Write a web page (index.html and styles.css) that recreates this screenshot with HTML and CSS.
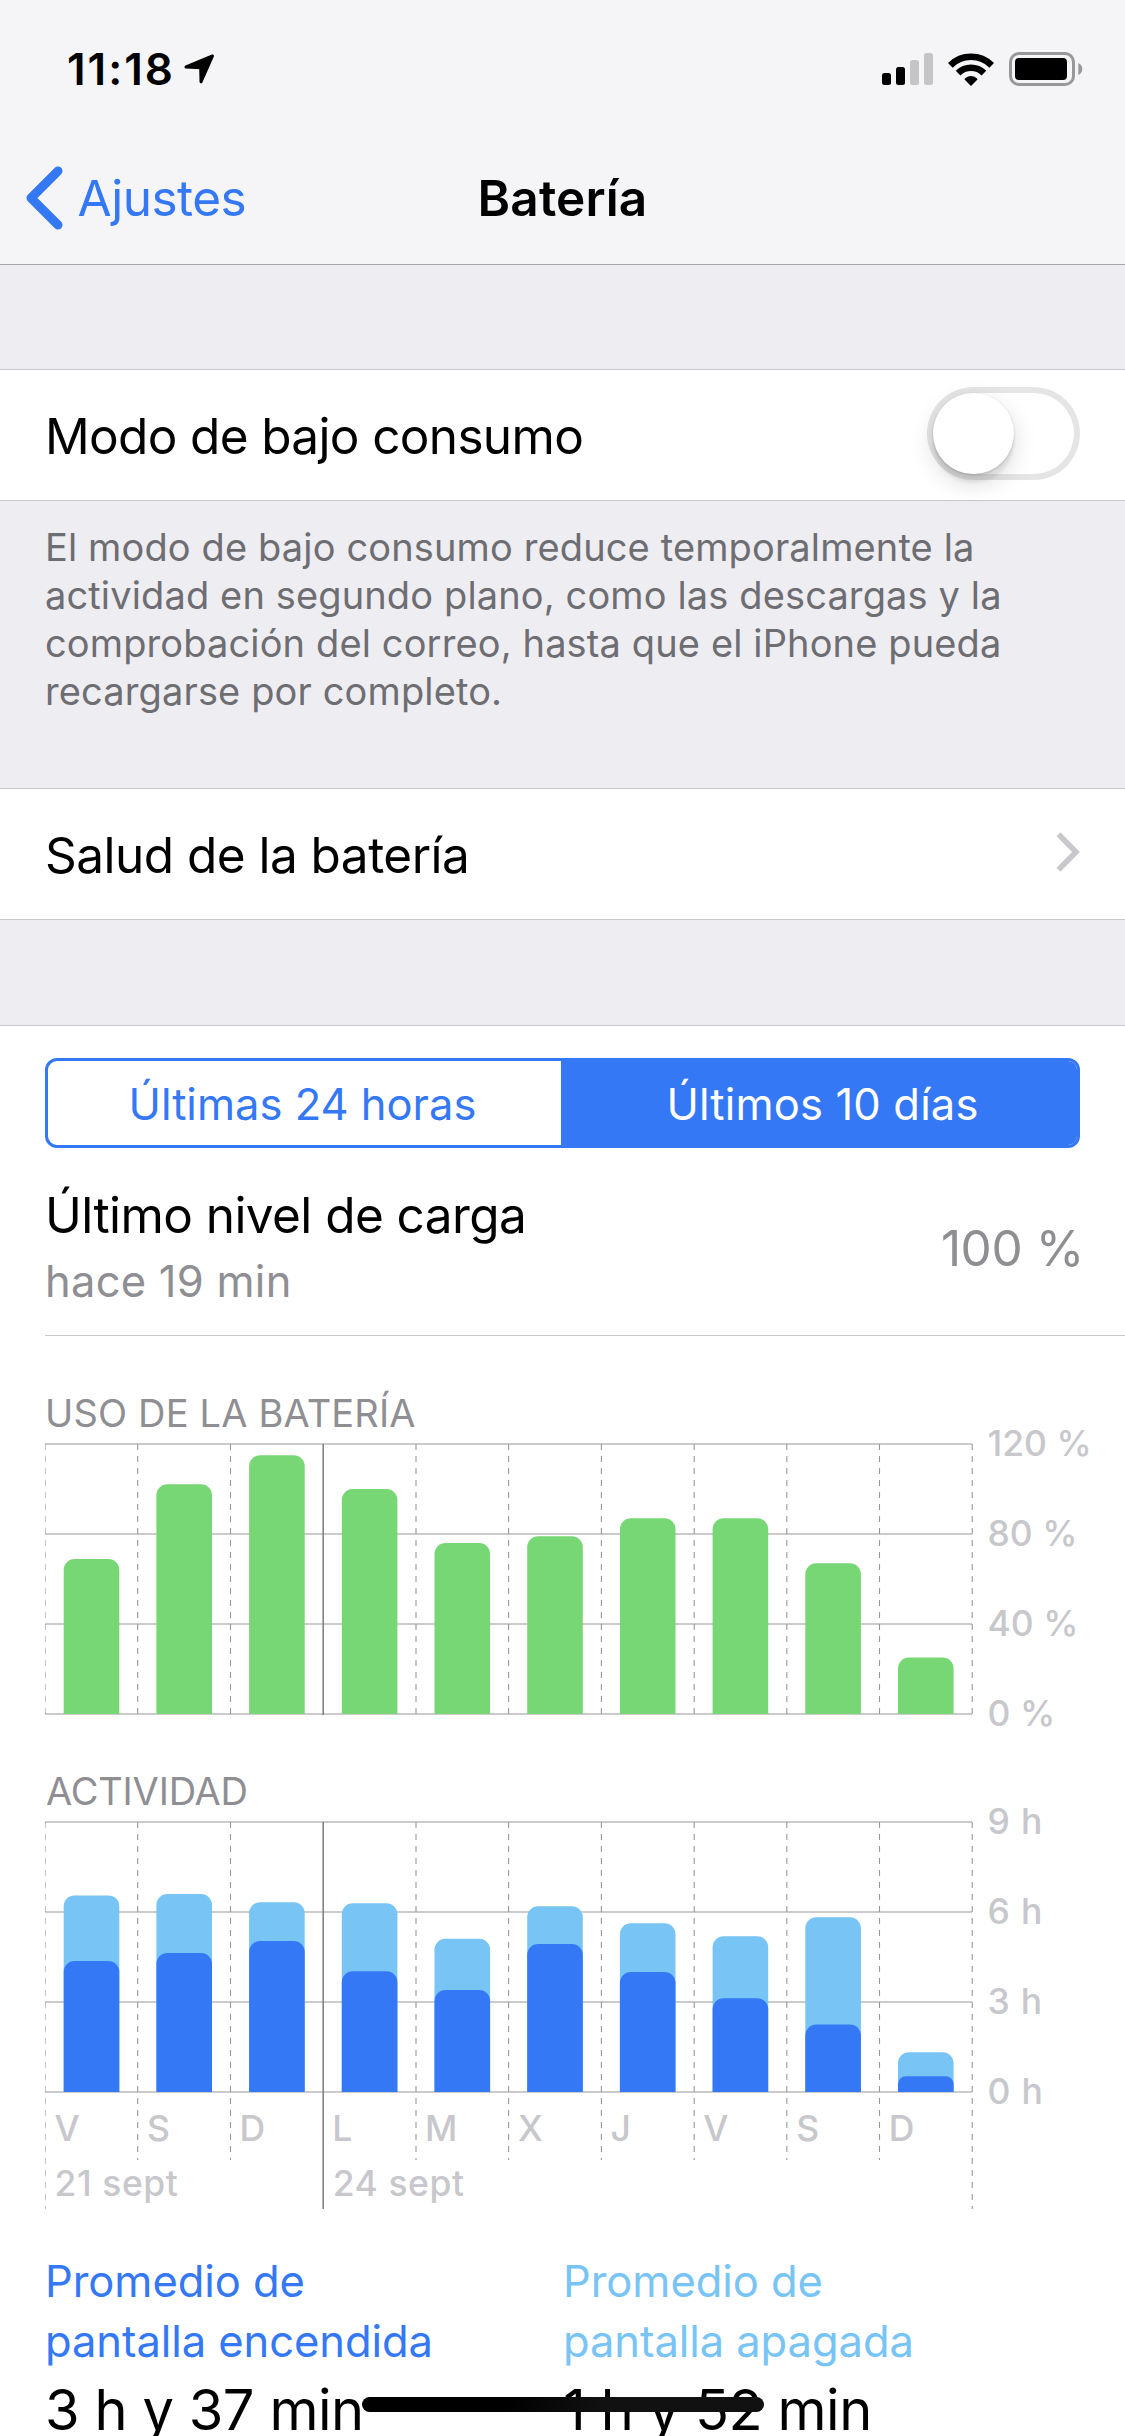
FILE: index.html
```html
<!DOCTYPE html>
<html lang="es">
<head>
<meta charset="utf-8">
<title>Batería</title>
<link rel="stylesheet" href="styles.css">
</head>
<body>
<div class="screen">
  <header class="top">
    <div class="status">
      <span class="time">11:18</span>
      <svg class="locate" width="31" height="30" viewBox="0 0 31 30"><path d="M2 13 28.5 2 17 27.8 16.7 13.8Z" fill="#000" stroke="#000" stroke-width="3" stroke-linejoin="round"/></svg>
      <div class="status-icons">
        <svg width="51" height="32" viewBox="0 0 51 32">
          <rect y="20" width="9" height="12" rx="2.5"/>
          <rect x="14" y="14" width="9" height="18" rx="2.5"/>
          <rect x="28" y="7" width="9" height="25" rx="2.5" fill="#c5c5c7"/>
          <rect x="42" width="9" height="32" rx="2.5" fill="#c5c5c7"/>
        </svg>
        <svg width="46" height="33" viewBox="0 0 46 33">
          <path d="M2.3 12.3A29.3 29.3 0 0 1 43.7 12.3M10.1 20.1A18.3 18.3 0 0 1 35.9 20.1" fill="none" stroke="#000" stroke-width="6.6"/>
          <path d="M23 33 16.8 26.8Q16.3 26 17.2 25.2 23 21 28.8 25.2 29.7 26 29.2 26.8Z"/>
        </svg>
        <svg width="74" height="34" viewBox="0 0 74 34">
          <rect x="1.5" y="1.5" width="63" height="31" rx="8.5" fill="none" stroke="#98989a" stroke-width="3"/>
          <rect x="6" y="6" width="52" height="22" rx="4"/>
          <path d="M69.3 11Q73.3 13 73.3 17T69.3 23Z" fill="#98989a"/>
        </svg>
      </div>
    </div>
    <nav class="nav">
      <a class="back">
        <svg width="37" height="64" viewBox="0 0 37 64"><path d="M32 5 5 32 32 59" fill="none" stroke="#3478f6" stroke-width="9" stroke-linecap="round" stroke-linejoin="round"/></svg>
        <span>Ajustes</span>
      </a>
      <h1>Batería</h1>
    </nav>
  </header>

  <section class="row power">
    <span>Modo de bajo consumo</span>
    <span class="switch"><i class="knob"></i></span>
  </section>
  <p class="note">El modo de bajo consumo reduce temporalmente la<br>actividad en segundo plano, como las descargas y la<br>comprobación del correo, hasta que el iPhone pueda<br>recargarse por completo.</p>

  <section class="row health">
    <span>Salud de la batería</span>
    <svg class="more" width="24" height="40" viewBox="0 0 24 40"><path d="M2.5 2.2 20 20 2.5 37.8" fill="none" stroke="#c7c7cc" stroke-width="5.5"/></svg>
  </section>

  <main class="panel">
    <div class="segments">
      <span class="segment">Últimas 24 horas</span>
      <span class="segment active">Últimos 10 días</span>
    </div>

    <div class="charge">
      <div>
        <div class="charge-title">Último nivel de carga</div>
        <div class="charge-time">hace 19 min</div>
      </div>
      <span class="charge-value">100 %</span>
    </div>

    <h2 class="usage-title">USO DE LA BATERÍA</h2>
    <div class="chart usage">
      <svg class="plot" width="930" height="286" viewBox="0 0 930 286">
        <defs><clipPath id="area"><rect width="930" height="278"/></clipPath></defs>
        <path class="grid" d="M0 8H927M0 98H927M0 188H927M0 278H927"/>
        <path class="days" d="M0 8V279M92.7 8V279M185.5 8V279M371 8V279M463.6 8V279M556.4 8V279M649.2 8V279M741.8 8V279M834.5 8V279M927.2 8V279"/>
        <path class="week" d="M278.2 8V279"/>
        <g class="green" clip-path="url(#area)">
          <rect x="18.7" y="123" width="55.6" height="300" rx="11"/>
          <rect x="111.4" y="48.3" width="55.6" height="300" rx="11"/>
          <rect x="204.1" y="19.3" width="55.6" height="300" rx="11"/>
          <rect x="296.8" y="53" width="55.6" height="300" rx="11"/>
          <rect x="389.5" y="107" width="55.6" height="300" rx="11"/>
          <rect x="482.2" y="100.2" width="55.6" height="300" rx="11"/>
          <rect x="574.9" y="82.2" width="55.6" height="300" rx="11"/>
          <rect x="667.6" y="82.2" width="55.6" height="300" rx="11"/>
          <rect x="760.3" y="127.2" width="55.6" height="300" rx="11"/>
          <rect x="853" y="221.5" width="55.6" height="300" rx="11"/>
        </g>
      </svg>
      <div class="axis"><span>120 %</span><span>80 %</span><span>40 %</span><span>0 %</span></div>
    </div>

    <h2 class="activity-title">ACTIVIDAD</h2>
    <div class="chart activity">
      <svg class="plot" width="930" height="395" viewBox="0 0 930 395">
        <path class="grid" d="M0 8H927M0 98H927M0 188H927M0 278H927"/>
        <path class="days" d="M0 8V395M92.7 8V346M185.5 8V346M371 8V346M463.6 8V346M556.4 8V346M649.2 8V346M741.8 8V346M834.5 8V346M927.2 8V395"/>
        <path class="week" d="M278.2 8V395"/>
        <g class="light" clip-path="url(#area)">
          <rect x="18.7" y="81.4" width="55.6" height="300" rx="11"/>
          <rect x="111.4" y="80" width="55.6" height="300" rx="11"/>
          <rect x="204.1" y="88.3" width="55.6" height="300" rx="11"/>
          <rect x="296.8" y="89.2" width="55.6" height="300" rx="11"/>
          <rect x="389.5" y="124.7" width="55.6" height="300" rx="11"/>
          <rect x="482.2" y="92.2" width="55.6" height="300" rx="11"/>
          <rect x="574.9" y="109.2" width="55.6" height="300" rx="11"/>
          <rect x="667.6" y="122.2" width="55.6" height="300" rx="11"/>
          <rect x="760.3" y="103.3" width="55.6" height="300" rx="11"/>
          <rect x="853" y="238.2" width="55.6" height="300" rx="11"/>
        </g>
        <g class="dark" clip-path="url(#area)">
          <rect x="18.7" y="147" width="55.6" height="300" rx="11"/>
          <rect x="111.4" y="139" width="55.6" height="300" rx="11"/>
          <rect x="204.1" y="127" width="55.6" height="300" rx="11"/>
          <rect x="296.8" y="157.3" width="55.6" height="300" rx="11"/>
          <rect x="389.5" y="176" width="55.6" height="300" rx="11"/>
          <rect x="482.2" y="130" width="55.6" height="300" rx="11"/>
          <rect x="574.9" y="158" width="55.6" height="300" rx="11"/>
          <rect x="667.6" y="184.2" width="55.6" height="300" rx="11"/>
          <rect x="760.3" y="210.5" width="55.6" height="300" rx="11"/>
          <rect x="853" y="262.2" width="55.6" height="300" rx="8"/>
        </g>
        <g class="labels">
          <text x="9.5" y="327">V</text><text x="102" y="327">S</text><text x="194.5" y="327">D</text><text x="287.2" y="327">L</text><text x="380" y="327">M</text><text x="473" y="327">X</text><text x="565.5" y="327">J</text><text x="658.3" y="327">V</text><text x="751.2" y="327">S</text><text x="843.7" y="327">D</text>
          <text x="9.5" y="382">21 sept</text><text x="287.7" y="382">24 sept</text>
        </g>
      </svg>
      <div class="axis hours"><span>9 h</span><span>6 h</span><span>3 h</span><span>0 h</span></div>
    </div>

    <div class="averages">
      <div class="screen-on">Promedio de<br>pantalla encendida<strong>3 h y 37 min</strong></div>
      <div class="screen-off">Promedio de<br>pantalla apagada<strong>1 h y 52 min</strong></div>
    </div>
  </main>
  <div class="home"></div>
</div>
</body>
</html>
```
FILE: styles.css
```css
* { box-sizing: border-box; }
body { margin: 0; background: #efeff4; }
.screen {
  position: relative;
  width: 1125px;
  height: 2436px;
  overflow: hidden;
  background: #eeedf2;
  color: #000;
  font-family: Inter, "Liberation Sans", sans-serif;
  font-size: 49.5px;
  line-height: 60px;
  white-space: nowrap;
}
svg { display: block; flex: none; }
h1, h2, p { margin: 0; font-weight: 400; }

/* Status bar and navigation */
.top { height: 265px; background: #f5f5f7; border-bottom: 1px solid #a7a7aa; }
.status { display: flex; align-items: center; height: 138px; padding: 0 42px 0 67px; }
.time { width: 117px; font-size: 44px; font-weight: 600; letter-spacing: 2px; }
.status-icons { display: flex; align-items: center; gap: 15px; margin-left: auto; }
.nav {
  display: grid;
  grid-template-columns: 1fr auto 1fr;
  align-items: center;
  height: 126px;
  padding: 0 26px 6px;
}
.back { display: flex; align-items: center; gap: 14.5px; color: #3478f6; letter-spacing: -0.5px; }
.back span { margin-bottom: 1px; }
h1 { font-size: 49.5px; font-weight: 600; letter-spacing: 0.15px; }

/* Table rows */
.row {
  display: flex;
  align-items: center;
  justify-content: space-between;
  height: 132px;
  padding: 2px 45px 0;
  background: #fff;
  border: solid #c8c7cc;
  border-width: 1px 0;
  letter-spacing: -0.65px;
}
.power { margin-top: 104px; }
.health { letter-spacing: -0.52px; }
.more { margin-bottom: 6px; }
.switch {
  width: 153px;
  height: 93px;
  margin-bottom: 5px;
  padding: 6px;
  border-radius: 47px;
  box-shadow: inset 0 0 0 6px #e5e5e5;
}
.knob {
  display: block;
  width: 81px;
  height: 81px;
  border-radius: 50%;
  background: #fff;
  box-shadow: 0 9px 24px rgba(0, 0, 0, .15), 0 9px 3px rgba(0, 0, 0, .06), 0 1px 3px rgba(0, 0, 0, .16);
}
.note {
  margin-bottom: 73px;
  padding: 22px 45px 0;
  color: #6d6d72;
  font-size: 38px;
  line-height: 48px;
  letter-spacing: 0.13px;
}

/* Battery panel */
.panel { margin-top: 105px; padding-top: 32px; background: #fff; border-top: 1px solid #c8c7cc; }
.segments {
  display: grid;
  grid-template-columns: 513px 1fr;
  width: 1035px;
  height: 90px;
  margin-left: 45px;
  border: 3px solid #3478f6;
  border-radius: 12px;
  overflow: hidden;
}
.segment { display: grid; place-items: center; padding: 1px 4px 0 0; color: #3478f6; font-size: 43.5px; }
.segment.active { padding: 1px 0 0 7px; background: #3478f6; color: #fff; letter-spacing: 0.17px; }
.charge {
  display: flex;
  align-items: center;
  justify-content: space-between;
  height: 188px;
  margin-left: 45px;
  padding: 13px 41px 0 0;
  border-bottom: 1px solid #c8c7cc;
}
.charge-title { margin-bottom: 6px; letter-spacing: -0.57px; }
.charge-time { color: #8e8e93; font-size: 43.5px; letter-spacing: 0.25px; }
.charge-value { color: #8e8e93; letter-spacing: -0.4px; }

/* Charts */
h2 { padding-left: 45px; color: #8e8e93; font-size: 38px; line-height: 46px; letter-spacing: 0.17px; }
.usage-title { margin-top: 54px; }
.activity-title { margin-top: 39px; padding-left: 46px; letter-spacing: -0.2px; }
.chart { display: flex; padding-left: 45px; }
.usage { height: 293px; }
.activity { height: 395px; }
.axis {
  display: flex;
  flex-direction: column;
  justify-content: space-between;
  height: 300px;
  margin: -7px 0 0 12.5px;
  color: #c7c7cc;
  font-size: 35.5px;
  font-weight: 500;
  line-height: 30px;
}
.hours { letter-spacing: 0.8px; }
.grid { fill: none; stroke: #cbcbcd; stroke-width: 2; }
.days { fill: none; stroke: #98989b; stroke-width: 1.1; stroke-dasharray: 6; }
.week { fill: none; stroke: #828284; stroke-width: 1.6; }
.green { fill: #77d774; }
.light { fill: #78c4f5; }
.dark { fill: #3478f6; }
.labels { fill: #c7c7cc; font-size: 35.5px; font-weight: 500; letter-spacing: 0.55px; }

/* Averages */
.averages {
  display: grid;
  grid-template-columns: 518px 1fr;
  margin-top: 42px;
  padding-left: 45px;
  font-size: 43.5px;
  letter-spacing: -0.06px;
}
.screen-on { color: #3478f6; }
.screen-off { color: #78c4f5; }
.averages strong {
  display: block;
  margin-top: 3px;
  color: #000;
  font-size: 56px;
  font-weight: 400;
  line-height: 72px;
  letter-spacing: -0.45px;
}
.home {
  position: absolute;
  left: 362px;
  bottom: 24px;
  width: 402px;
  height: 15px;
  border-radius: 8px;
  background: linear-gradient(90deg, #000 35%, #111 60%);
}
```
